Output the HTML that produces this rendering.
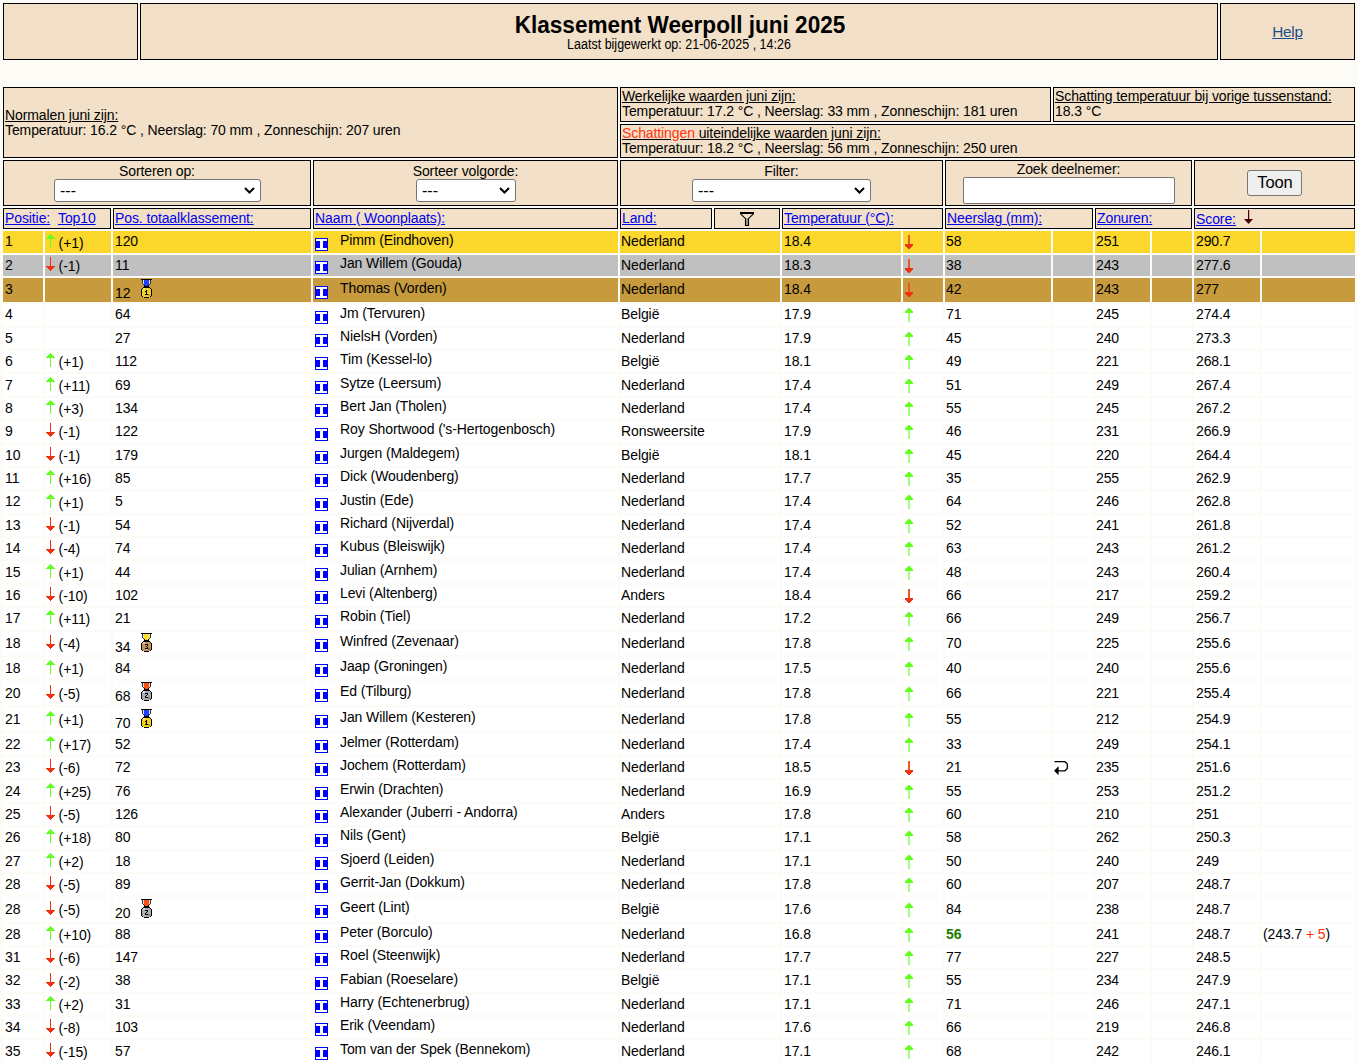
<!DOCTYPE html><html><head><meta charset="utf-8"><title>Klassement Weerpoll juni 2025</title><style>
html,body{margin:0;padding:0}
body{background:#FCFBF5;width:1357px;height:1062px;overflow:hidden;position:relative;font-family:"Liberation Sans",sans-serif;font-size:14px;line-height:16px;color:#000;letter-spacing:-0.1px}
.b{position:absolute;box-sizing:border-box;border:1px solid #000;background:#F2E0C8}
.c{position:absolute;background:#fff}
.t{position:absolute;white-space:pre}
.l{position:absolute;white-space:pre;color:#0000EE;text-decoration:underline}
.s{position:absolute;overflow:visible}
.g{color:#1D7A00}
.sel{position:absolute;box-sizing:border-box;border:1px solid #767676;border-radius:3px;background:#fff}
</style></head><body>
<svg width="0" height="0" style="position:absolute">
<defs>
<symbol id="ub" viewBox="0 0 9 14" shape-rendering="crispEdges"><rect x="4" y="0" width="1" height="1" fill="#66FF22"/><rect x="3" y="1" width="3" height="1" fill="#66FF22"/><rect x="2" y="2" width="5" height="1" fill="#66FF22"/><rect x="1" y="3" width="7" height="1" fill="#66FF22"/><rect x="0" y="4" width="9" height="1" fill="#66FF22"/><rect x="4" y="5" width="1" height="9" fill="#66FF22"/></symbol>
<symbol id="db" viewBox="0 0 9 14" shape-rendering="crispEdges"><rect x="4" y="0" width="1" height="9" fill="#F03010"/><rect x="0" y="9" width="9" height="1" fill="#F03010"/><rect x="1" y="10" width="7" height="1" fill="#F03010"/><rect x="2" y="11" width="5" height="1" fill="#F03010"/><rect x="3" y="12" width="3" height="1" fill="#F03010"/><rect x="4" y="13" width="1" height="1" fill="#F03010"/></symbol>
<symbol id="ug" viewBox="0 0 8 14" shape-rendering="crispEdges"><rect x="3" y="0" width="2" height="1" fill="#66FF22"/><rect x="2" y="1" width="4" height="1" fill="#66FF22"/><rect x="1" y="2" width="6" height="1" fill="#66FF22"/><rect x="0" y="3" width="8" height="1" fill="#66FF22"/><rect x="0" y="4" width="8" height="1" fill="#66FF22"/><rect x="3" y="5" width="2" height="9" fill="#A0FF80"/></symbol>
<symbol id="dg" viewBox="0 0 8 14" shape-rendering="crispEdges"><rect x="3" y="0" width="2" height="9" fill="#E85A22"/><rect x="0" y="9" width="8" height="1" fill="#EE3311"/><rect x="0" y="10" width="8" height="1" fill="#EE3311"/><rect x="1" y="11" width="6" height="1" fill="#EE3311"/><rect x="2" y="12" width="4" height="1" fill="#EE3311"/><rect x="3" y="13" width="2" height="1" fill="#EE3311"/></symbol>
<symbol id="ic" viewBox="0 0 13 13" shape-rendering="crispEdges"><rect width="13" height="13" fill="#0000FF"/><rect x="1" y="1" width="11" height="2" fill="#fff"/><rect x="1" y="10" width="11" height="2" fill="#fff"/><rect x="5" y="3" width="3" height="7" fill="#fff"/></symbol>
<symbol id="ret" viewBox="0 0 14 14"><path d="M0.5 0.7H11L13.3 3V7.5L11 9.8H4" fill="none" stroke="#000" stroke-width="1.3"/><path d="M0 9.8L4.6 5.2V14.2Z" fill="#000"/></symbol>
<symbol id="fun" viewBox="0 0 14 14"><rect x="5.5" y="6" width="3" height="7.5" fill="#A09585"/><rect x="0" y="0" width="14" height="2" fill="#000"/><path d="M0.6 1.8L5.5 6.7V13.5H8.5V6.7L13.4 1.8" fill="none" stroke="#000" stroke-width="1.1"/></symbol>
<symbol id="sar" viewBox="0 0 9 14"><rect x="4" y="0" width="1.2" height="10" fill="#4A0000"/><path d="M0 9H9L4.5 14Z" fill="#4A0000"/></symbol>
<symbol id="m1" viewBox="0 0 11 19" shape-rendering="crispEdges">
<rect x="0" y="0" width="11" height="1" fill="#000"/>
<rect x="1" y="1" width="9" height="4" fill="#333"/>
<rect x="2" y="1" width="7" height="4" fill="#E0E0E8"/>
<rect x="3" y="1" width="5" height="4" fill="#2040FF"/>
<rect x="2" y="5" width="7" height="1" fill="#333"/>
<rect x="3" y="5" width="5" height="1" fill="#2040FF"/>
<rect x="3" y="6" width="5" height="1" fill="#000"/>
<rect x="4" y="6" width="3" height="1" fill="#2040FF"/>
<rect x="3" y="7" width="5" height="1" fill="#000"/>
<rect x="2" y="8" width="7" height="1" fill="#000"/>
<rect x="1" y="9" width="9" height="9" fill="#000"/>
<rect x="0" y="10" width="11" height="7" fill="#000"/>
<rect x="3" y="18" width="5" height="1" fill="#000"/>
<rect x="2" y="9" width="7" height="9" fill="#F0D020"/>
<rect x="1" y="10" width="9" height="7" fill="#F0D020"/>
<rect x="2" y="9" width="2" height="2" fill="#FFFFFF" opacity="0.5"/>
<rect x="7" y="15" width="2" height="2" fill="#000" opacity="0.25"/>
<rect x="5" y="11" width="1" height="5" fill="#000"/><rect x="4" y="12" width="1" height="1" fill="#000"/><rect x="4" y="15" width="3" height="1" fill="#000"/>
</symbol><symbol id="m2" viewBox="0 0 11 19" shape-rendering="crispEdges">
<rect x="0" y="0" width="11" height="1" fill="#000"/>
<rect x="1" y="1" width="9" height="4" fill="#333"/>
<rect x="2" y="1" width="7" height="4" fill="#E0E0E8"/>
<rect x="3" y="1" width="5" height="4" fill="#FF5010"/>
<rect x="2" y="5" width="7" height="1" fill="#333"/>
<rect x="3" y="5" width="5" height="1" fill="#FF5010"/>
<rect x="3" y="6" width="5" height="1" fill="#000"/>
<rect x="4" y="6" width="3" height="1" fill="#FF5010"/>
<rect x="3" y="7" width="5" height="1" fill="#000"/>
<rect x="2" y="8" width="7" height="1" fill="#000"/>
<rect x="1" y="9" width="9" height="9" fill="#000"/>
<rect x="0" y="10" width="11" height="7" fill="#000"/>
<rect x="3" y="18" width="5" height="1" fill="#000"/>
<rect x="2" y="9" width="7" height="9" fill="#A8AEB4"/>
<rect x="1" y="10" width="9" height="7" fill="#A8AEB4"/>
<rect x="2" y="9" width="2" height="2" fill="#FFFFFF" opacity="0.5"/>
<rect x="7" y="15" width="2" height="2" fill="#000" opacity="0.25"/>
<rect x="4" y="11" width="3" height="1" fill="#000"/><rect x="6" y="12" width="1" height="1" fill="#000"/><rect x="5" y="13" width="1" height="1" fill="#000"/><rect x="4" y="14" width="1" height="1" fill="#000"/><rect x="4" y="15" width="3" height="1" fill="#000"/>
</symbol><symbol id="m3" viewBox="0 0 11 19" shape-rendering="crispEdges">
<rect x="0" y="0" width="11" height="1" fill="#000"/>
<rect x="1" y="1" width="9" height="4" fill="#333"/>
<rect x="2" y="1" width="7" height="4" fill="#E0E0E8"/>
<rect x="3" y="1" width="5" height="4" fill="#FFE020"/>
<rect x="2" y="5" width="7" height="1" fill="#333"/>
<rect x="3" y="5" width="5" height="1" fill="#FFE020"/>
<rect x="3" y="6" width="5" height="1" fill="#000"/>
<rect x="4" y="6" width="3" height="1" fill="#FFE020"/>
<rect x="3" y="7" width="5" height="1" fill="#000"/>
<rect x="2" y="8" width="7" height="1" fill="#000"/>
<rect x="1" y="9" width="9" height="9" fill="#000"/>
<rect x="0" y="10" width="11" height="7" fill="#000"/>
<rect x="3" y="18" width="5" height="1" fill="#000"/>
<rect x="2" y="9" width="7" height="9" fill="#C0945A"/>
<rect x="1" y="10" width="9" height="7" fill="#C0945A"/>
<rect x="2" y="9" width="2" height="2" fill="#FFFFFF" opacity="0.5"/>
<rect x="7" y="15" width="2" height="2" fill="#000" opacity="0.25"/>
<rect x="4" y="11" width="3" height="1" fill="#000"/><rect x="6" y="12" width="1" height="1" fill="#000"/><rect x="5" y="13" width="1" height="1" fill="#000"/><rect x="6" y="14" width="1" height="1" fill="#000"/><rect x="4" y="15" width="3" height="1" fill="#000"/>
</symbol></defs></svg>
<div class="b" style="left:3px;top:3px;width:135px;height:57px;"></div>
<div class="b" style="left:140px;top:3px;width:1078px;height:57px;"></div>
<div class="b" style="left:1220px;top:3px;width:135px;height:57px;"></div>
<div class="t" style="left:141px;width:1078px;top:8.5px;text-align:center;font-weight:bold;font-size:23.5px;line-height:32px;letter-spacing:0;transform:scaleX(0.96)">Klassement Weerpoll juni 2025</div>
<div class="t" style="left:140px;width:1078px;top:36px;text-align:center;font-size:14px;letter-spacing:0;transform:scaleX(0.893)">Laatst bijgewerkt op: 21-06-2025 , 14:26</div>
<div class="t" style="left:1220px;width:135px;top:23px;text-align:center;font-size:15.3px;line-height:18px;color:#1D4E89;letter-spacing:-0.2px;text-decoration:underline">Help</div>
<div class="b" style="left:3px;top:87px;width:615px;height:71px;"></div>
<div class="b" style="left:620px;top:87px;width:431px;height:35px;"></div>
<div class="b" style="left:1053px;top:87px;width:302px;height:35px;"></div>
<div class="b" style="left:620px;top:124px;width:735px;height:34px;"></div>
<div class="t" style="left:5px;top:107px;"><u>Normalen juni zijn:</u></div>
<div class="t" style="left:5px;top:122px;">Temperatuur: 16.2 °C , Neerslag: 70 mm , Zonneschijn: 207 uren</div>
<div class="t" style="left:622px;top:88px;"><u>Werkelijke waarden juni zijn:</u></div>
<div class="t" style="left:622px;top:103px;">Temperatuur: 17.2 °C , Neerslag: 33 mm , Zonneschijn: 181 uren</div>
<div class="t" style="left:1055px;top:88px;"><u>Schatting temperatuur bij vorige tussenstand:</u></div>
<div class="t" style="left:1055px;top:103px;">18.3 °C</div>
<div class="t" style="left:622px;top:125px;"><u><span style="color:#FF3311">Schattingen</span> uiteindelijke waarden juni zijn:</u></div>
<div class="t" style="left:622px;top:140px;">Temperatuur: 18.2 °C , Neerslag: 56 mm , Zonneschijn: 250 uren</div>
<div class="b" style="left:3px;top:160px;width:308px;height:46px;"></div>
<div class="b" style="left:313px;top:160px;width:305px;height:46px;"></div>
<div class="b" style="left:620px;top:160px;width:323px;height:46px;"></div>
<div class="b" style="left:945px;top:160px;width:247px;height:46px;"></div>
<div class="b" style="left:1194px;top:160px;width:161px;height:46px;"></div>
<div class="t" style="left:3px;width:308px;top:163px;text-align:center">Sorteren op:</div>
<div class="sel" style="left:54px;top:179px;width:207px;height:23px"></div>
<div class="t" style="left:60px;top:181.5px;font-size:16px;line-height:18px;letter-spacing:0">---</div>
<svg class="s" style="left:244px;top:187px" width="11" height="7"><path d="M1 1L5.5 5.5L10 1" fill="none" stroke="#000" stroke-width="2"/></svg>
<div class="t" style="left:313px;width:305px;top:163px;text-align:center">Sorteer volgorde:</div>
<div class="sel" style="left:416px;top:179px;width:100px;height:23px"></div>
<div class="t" style="left:422px;top:181.5px;font-size:16px;line-height:18px;letter-spacing:0">---</div>
<svg class="s" style="left:499px;top:187px" width="11" height="7"><path d="M1 1L5.5 5.5L10 1" fill="none" stroke="#000" stroke-width="2"/></svg>
<div class="t" style="left:620px;width:323px;top:163px;text-align:center">Filter:</div>
<div class="sel" style="left:692px;top:179px;width:179px;height:23px"></div>
<div class="t" style="left:698px;top:181.5px;font-size:16px;line-height:18px;letter-spacing:0">---</div>
<svg class="s" style="left:854px;top:187px" width="11" height="7"><path d="M1 1L5.5 5.5L10 1" fill="none" stroke="#000" stroke-width="2"/></svg>
<div class="t" style="left:945px;width:247px;top:161px;text-align:center">Zoek deelnemer:</div>
<div class="sel" style="left:963px;top:177px;width:212px;height:27px;border-radius:2px"></div>
<div class="sel" style="left:1247px;top:170px;width:55px;height:26px;background:#EFEFEF;border-radius:3px"></div>
<div class="t" style="left:1247px;width:56px;top:173px;text-align:center;font-size:16.5px;line-height:18px">Toon</div>
<div class="b" style="left:3px;top:208px;width:108px;height:21px;"></div>
<div class="b" style="left:113px;top:208px;width:198px;height:21px;"></div>
<div class="b" style="left:313px;top:208px;width:305px;height:21px;"></div>
<div class="b" style="left:620px;top:208px;width:92px;height:21px;"></div>
<div class="b" style="left:714px;top:208px;width:66px;height:21px;"></div>
<div class="b" style="left:782px;top:208px;width:161px;height:21px;"></div>
<div class="b" style="left:945px;top:208px;width:148px;height:21px;"></div>
<div class="b" style="left:1095px;top:208px;width:97px;height:21px;"></div>
<div class="b" style="left:1194px;top:208px;width:161px;height:21px;"></div>
<div class="l" style="left:5px;top:210px">Positie:</div>
<div class="l" style="left:58px;top:210px">Top10</div>
<div class="l" style="left:115px;top:210px">Pos. totaalklassement:</div>
<div class="l" style="left:315px;top:210px">Naam ( Woonplaats):</div>
<div class="l" style="left:622px;top:210px">Land:</div>
<div class="l" style="left:784px;top:210px">Temperatuur (°C):</div>
<div class="l" style="left:947px;top:210px">Neerslag (mm):</div>
<div class="l" style="left:1097px;top:210px">Zonuren:</div>
<div class="l" style="left:1196px;top:211px">Score:</div>
<svg class="s" style="left:740px;top:212px" width="14" height="14"><use href="#fun"/></svg>
<svg class="s" style="left:1244px;top:210px" width="9" height="14"><use href="#sar"/></svg>
<div class="c" style="left:3px;top:231px;width:40px;height:22px;background:#FBD62B"></div>
<div class="c" style="left:45px;top:231px;width:66px;height:22px;background:#FBD62B"></div>
<div class="c" style="left:113px;top:231px;width:198px;height:22px;background:#FBD62B"></div>
<div class="c" style="left:313px;top:231px;width:305px;height:22px;background:#FBD62B"></div>
<div class="c" style="left:620px;top:231px;width:160px;height:22px;background:#FBD62B"></div>
<div class="c" style="left:782px;top:231px;width:119px;height:22px;background:#FBD62B"></div>
<div class="c" style="left:903px;top:231px;width:40px;height:22px;background:#FBD62B"></div>
<div class="c" style="left:945px;top:231px;width:106px;height:22px;background:#FBD62B"></div>
<div class="c" style="left:1053px;top:231px;width:40px;height:22px;background:#FBD62B"></div>
<div class="c" style="left:1095px;top:231px;width:55px;height:22px;background:#FBD62B"></div>
<div class="c" style="left:1152px;top:231px;width:40px;height:22px;background:#FBD62B"></div>
<div class="c" style="left:1194px;top:231px;width:66px;height:22px;background:#FBD62B"></div>
<div class="c" style="left:1262px;top:231px;width:93px;height:22px;background:#FBD62B"></div>
<div class="t" style="left:5px;top:233px;">1</div>
<svg class="s" style="left:46px;top:234px" width="9" height="14"><use href="#ub"/></svg>
<div class="t" style="left:58.6px;top:235px;">(+1)</div>
<div class="t" style="left:115px;top:233px;">120</div>
<svg class="s" style="left:315px;top:238px" width="13" height="13"><use href="#ic"/></svg>
<div class="t" style="left:340px;top:232px;">Pimm (Eindhoven)</div>
<div class="t" style="left:621px;top:233px;">Nederland</div>
<div class="t" style="left:784px;top:233px;">18.4</div>
<svg class="s" style="left:905px;top:235px" width="8" height="14"><use href="#dg"/></svg>
<div class="t" style="left:946px;top:233px;">58</div>
<div class="t" style="left:1096px;top:233px;">251</div>
<div class="t" style="left:1196px;top:233px;">290.7</div>
<div class="c" style="left:3px;top:255px;width:40px;height:21px;background:#C0C0C0"></div>
<div class="c" style="left:45px;top:255px;width:66px;height:21px;background:#C0C0C0"></div>
<div class="c" style="left:113px;top:255px;width:198px;height:21px;background:#C0C0C0"></div>
<div class="c" style="left:313px;top:255px;width:305px;height:21px;background:#C0C0C0"></div>
<div class="c" style="left:620px;top:255px;width:160px;height:21px;background:#C0C0C0"></div>
<div class="c" style="left:782px;top:255px;width:119px;height:21px;background:#C0C0C0"></div>
<div class="c" style="left:903px;top:255px;width:40px;height:21px;background:#C0C0C0"></div>
<div class="c" style="left:945px;top:255px;width:106px;height:21px;background:#C0C0C0"></div>
<div class="c" style="left:1053px;top:255px;width:40px;height:21px;background:#C0C0C0"></div>
<div class="c" style="left:1095px;top:255px;width:55px;height:21px;background:#C0C0C0"></div>
<div class="c" style="left:1152px;top:255px;width:40px;height:21px;background:#C0C0C0"></div>
<div class="c" style="left:1194px;top:255px;width:66px;height:21px;background:#C0C0C0"></div>
<div class="c" style="left:1262px;top:255px;width:93px;height:21px;background:#C0C0C0"></div>
<div class="t" style="left:5px;top:257px;">2</div>
<svg class="s" style="left:46px;top:257px" width="9" height="14"><use href="#db"/></svg>
<div class="t" style="left:58.6px;top:258px;">(-1)</div>
<div class="t" style="left:115px;top:257px;">11</div>
<svg class="s" style="left:315px;top:261px" width="13" height="13"><use href="#ic"/></svg>
<div class="t" style="left:340px;top:255px;">Jan Willem (Gouda)</div>
<div class="t" style="left:621px;top:257px;">Nederland</div>
<div class="t" style="left:784px;top:257px;">18.3</div>
<svg class="s" style="left:905px;top:259px" width="8" height="14"><use href="#dg"/></svg>
<div class="t" style="left:946px;top:257px;">38</div>
<div class="t" style="left:1096px;top:257px;">243</div>
<div class="t" style="left:1196px;top:257px;">277.6</div>
<div class="c" style="left:3px;top:278px;width:40px;height:24px;background:#C69A3D"></div>
<div class="c" style="left:45px;top:278px;width:66px;height:24px;background:#C69A3D"></div>
<div class="c" style="left:113px;top:278px;width:198px;height:24px;background:#C69A3D"></div>
<div class="c" style="left:313px;top:278px;width:305px;height:24px;background:#C69A3D"></div>
<div class="c" style="left:620px;top:278px;width:160px;height:24px;background:#C69A3D"></div>
<div class="c" style="left:782px;top:278px;width:119px;height:24px;background:#C69A3D"></div>
<div class="c" style="left:903px;top:278px;width:40px;height:24px;background:#C69A3D"></div>
<div class="c" style="left:945px;top:278px;width:106px;height:24px;background:#C69A3D"></div>
<div class="c" style="left:1053px;top:278px;width:40px;height:24px;background:#C69A3D"></div>
<div class="c" style="left:1095px;top:278px;width:55px;height:24px;background:#C69A3D"></div>
<div class="c" style="left:1152px;top:278px;width:40px;height:24px;background:#C69A3D"></div>
<div class="c" style="left:1194px;top:278px;width:66px;height:24px;background:#C69A3D"></div>
<div class="c" style="left:1262px;top:278px;width:93px;height:24px;background:#C69A3D"></div>
<div class="t" style="left:5px;top:281px;">3</div>
<div class="t" style="left:115px;top:285px;">12</div>
<svg class="s" style="left:141px;top:279px" width="11" height="19"><use href="#m1"/></svg>
<svg class="s" style="left:315px;top:286px" width="13" height="13"><use href="#ic"/></svg>
<div class="t" style="left:340px;top:280px;">Thomas (Vorden)</div>
<div class="t" style="left:621px;top:281px;">Nederland</div>
<div class="t" style="left:784px;top:281px;">18.4</div>
<svg class="s" style="left:905px;top:283px" width="8" height="14"><use href="#dg"/></svg>
<div class="t" style="left:946px;top:281px;">42</div>
<div class="t" style="left:1096px;top:281px;">243</div>
<div class="t" style="left:1196px;top:281px;">277</div>
<div class="c" style="left:3px;top:304px;width:40px;height:22px;background:#fff"></div>
<div class="c" style="left:45px;top:304px;width:66px;height:22px;background:#fff"></div>
<div class="c" style="left:113px;top:304px;width:198px;height:22px;background:#fff"></div>
<div class="c" style="left:313px;top:304px;width:305px;height:22px;background:#fff"></div>
<div class="c" style="left:620px;top:304px;width:160px;height:22px;background:#fff"></div>
<div class="c" style="left:782px;top:304px;width:119px;height:22px;background:#fff"></div>
<div class="c" style="left:903px;top:304px;width:40px;height:22px;background:#fff"></div>
<div class="c" style="left:945px;top:304px;width:106px;height:22px;background:#fff"></div>
<div class="c" style="left:1053px;top:304px;width:40px;height:22px;background:#fff"></div>
<div class="c" style="left:1095px;top:304px;width:55px;height:22px;background:#fff"></div>
<div class="c" style="left:1152px;top:304px;width:40px;height:22px;background:#fff"></div>
<div class="c" style="left:1194px;top:304px;width:66px;height:22px;background:#fff"></div>
<div class="c" style="left:1262px;top:304px;width:93px;height:22px;background:#fff"></div>
<div class="t" style="left:5px;top:306px;">4</div>
<div class="t" style="left:115px;top:306px;">64</div>
<svg class="s" style="left:315px;top:311px" width="13" height="13"><use href="#ic"/></svg>
<div class="t" style="left:340px;top:305px;">Jm (Tervuren)</div>
<div class="t" style="left:621px;top:306px;">België</div>
<div class="t" style="left:784px;top:306px;">17.9</div>
<svg class="s" style="left:905px;top:308px" width="8" height="14"><use href="#ug"/></svg>
<div class="t" style="left:946px;top:306px;">71</div>
<div class="t" style="left:1096px;top:306px;">245</div>
<div class="t" style="left:1196px;top:306px;">274.4</div>
<div class="c" style="left:3px;top:328px;width:40px;height:21px;background:#fff"></div>
<div class="c" style="left:45px;top:328px;width:66px;height:21px;background:#fff"></div>
<div class="c" style="left:113px;top:328px;width:198px;height:21px;background:#fff"></div>
<div class="c" style="left:313px;top:328px;width:305px;height:21px;background:#fff"></div>
<div class="c" style="left:620px;top:328px;width:160px;height:21px;background:#fff"></div>
<div class="c" style="left:782px;top:328px;width:119px;height:21px;background:#fff"></div>
<div class="c" style="left:903px;top:328px;width:40px;height:21px;background:#fff"></div>
<div class="c" style="left:945px;top:328px;width:106px;height:21px;background:#fff"></div>
<div class="c" style="left:1053px;top:328px;width:40px;height:21px;background:#fff"></div>
<div class="c" style="left:1095px;top:328px;width:55px;height:21px;background:#fff"></div>
<div class="c" style="left:1152px;top:328px;width:40px;height:21px;background:#fff"></div>
<div class="c" style="left:1194px;top:328px;width:66px;height:21px;background:#fff"></div>
<div class="c" style="left:1262px;top:328px;width:93px;height:21px;background:#fff"></div>
<div class="t" style="left:5px;top:330px;">5</div>
<div class="t" style="left:115px;top:330px;">27</div>
<svg class="s" style="left:315px;top:334px" width="13" height="13"><use href="#ic"/></svg>
<div class="t" style="left:340px;top:328px;">NielsH (Vorden)</div>
<div class="t" style="left:621px;top:330px;">Nederland</div>
<div class="t" style="left:784px;top:330px;">17.9</div>
<svg class="s" style="left:905px;top:332px" width="8" height="14"><use href="#ug"/></svg>
<div class="t" style="left:946px;top:330px;">45</div>
<div class="t" style="left:1096px;top:330px;">240</div>
<div class="t" style="left:1196px;top:330px;">273.3</div>
<div class="c" style="left:3px;top:351px;width:40px;height:21px;background:#fff"></div>
<div class="c" style="left:45px;top:351px;width:66px;height:21px;background:#fff"></div>
<div class="c" style="left:113px;top:351px;width:198px;height:21px;background:#fff"></div>
<div class="c" style="left:313px;top:351px;width:305px;height:21px;background:#fff"></div>
<div class="c" style="left:620px;top:351px;width:160px;height:21px;background:#fff"></div>
<div class="c" style="left:782px;top:351px;width:119px;height:21px;background:#fff"></div>
<div class="c" style="left:903px;top:351px;width:40px;height:21px;background:#fff"></div>
<div class="c" style="left:945px;top:351px;width:106px;height:21px;background:#fff"></div>
<div class="c" style="left:1053px;top:351px;width:40px;height:21px;background:#fff"></div>
<div class="c" style="left:1095px;top:351px;width:55px;height:21px;background:#fff"></div>
<div class="c" style="left:1152px;top:351px;width:40px;height:21px;background:#fff"></div>
<div class="c" style="left:1194px;top:351px;width:66px;height:21px;background:#fff"></div>
<div class="c" style="left:1262px;top:351px;width:93px;height:21px;background:#fff"></div>
<div class="t" style="left:5px;top:353px;">6</div>
<svg class="s" style="left:46px;top:353px" width="9" height="14"><use href="#ub"/></svg>
<div class="t" style="left:58.6px;top:354px;">(+1)</div>
<div class="t" style="left:115px;top:353px;">112</div>
<svg class="s" style="left:315px;top:357px" width="13" height="13"><use href="#ic"/></svg>
<div class="t" style="left:340px;top:351px;">Tim (Kessel-lo)</div>
<div class="t" style="left:621px;top:353px;">België</div>
<div class="t" style="left:784px;top:353px;">18.1</div>
<svg class="s" style="left:905px;top:355px" width="8" height="14"><use href="#ug"/></svg>
<div class="t" style="left:946px;top:353px;">49</div>
<div class="t" style="left:1096px;top:353px;">221</div>
<div class="t" style="left:1196px;top:353px;">268.1</div>
<div class="c" style="left:3px;top:374px;width:40px;height:22px;background:#fff"></div>
<div class="c" style="left:45px;top:374px;width:66px;height:22px;background:#fff"></div>
<div class="c" style="left:113px;top:374px;width:198px;height:22px;background:#fff"></div>
<div class="c" style="left:313px;top:374px;width:305px;height:22px;background:#fff"></div>
<div class="c" style="left:620px;top:374px;width:160px;height:22px;background:#fff"></div>
<div class="c" style="left:782px;top:374px;width:119px;height:22px;background:#fff"></div>
<div class="c" style="left:903px;top:374px;width:40px;height:22px;background:#fff"></div>
<div class="c" style="left:945px;top:374px;width:106px;height:22px;background:#fff"></div>
<div class="c" style="left:1053px;top:374px;width:40px;height:22px;background:#fff"></div>
<div class="c" style="left:1095px;top:374px;width:55px;height:22px;background:#fff"></div>
<div class="c" style="left:1152px;top:374px;width:40px;height:22px;background:#fff"></div>
<div class="c" style="left:1194px;top:374px;width:66px;height:22px;background:#fff"></div>
<div class="c" style="left:1262px;top:374px;width:93px;height:22px;background:#fff"></div>
<div class="t" style="left:5px;top:377px;">7</div>
<svg class="s" style="left:46px;top:377px" width="9" height="14"><use href="#ub"/></svg>
<div class="t" style="left:58.6px;top:378px;">(+11)</div>
<div class="t" style="left:115px;top:377px;">69</div>
<svg class="s" style="left:315px;top:381px" width="13" height="13"><use href="#ic"/></svg>
<div class="t" style="left:340px;top:375px;">Sytze (Leersum)</div>
<div class="t" style="left:621px;top:377px;">Nederland</div>
<div class="t" style="left:784px;top:377px;">17.4</div>
<svg class="s" style="left:905px;top:379px" width="8" height="14"><use href="#ug"/></svg>
<div class="t" style="left:946px;top:377px;">51</div>
<div class="t" style="left:1096px;top:377px;">249</div>
<div class="t" style="left:1196px;top:377px;">267.4</div>
<div class="c" style="left:3px;top:398px;width:40px;height:21px;background:#fff"></div>
<div class="c" style="left:45px;top:398px;width:66px;height:21px;background:#fff"></div>
<div class="c" style="left:113px;top:398px;width:198px;height:21px;background:#fff"></div>
<div class="c" style="left:313px;top:398px;width:305px;height:21px;background:#fff"></div>
<div class="c" style="left:620px;top:398px;width:160px;height:21px;background:#fff"></div>
<div class="c" style="left:782px;top:398px;width:119px;height:21px;background:#fff"></div>
<div class="c" style="left:903px;top:398px;width:40px;height:21px;background:#fff"></div>
<div class="c" style="left:945px;top:398px;width:106px;height:21px;background:#fff"></div>
<div class="c" style="left:1053px;top:398px;width:40px;height:21px;background:#fff"></div>
<div class="c" style="left:1095px;top:398px;width:55px;height:21px;background:#fff"></div>
<div class="c" style="left:1152px;top:398px;width:40px;height:21px;background:#fff"></div>
<div class="c" style="left:1194px;top:398px;width:66px;height:21px;background:#fff"></div>
<div class="c" style="left:1262px;top:398px;width:93px;height:21px;background:#fff"></div>
<div class="t" style="left:5px;top:400px;">8</div>
<svg class="s" style="left:46px;top:400px" width="9" height="14"><use href="#ub"/></svg>
<div class="t" style="left:58.6px;top:401px;">(+3)</div>
<div class="t" style="left:115px;top:400px;">134</div>
<svg class="s" style="left:315px;top:404px" width="13" height="13"><use href="#ic"/></svg>
<div class="t" style="left:340px;top:398px;">Bert Jan (Tholen)</div>
<div class="t" style="left:621px;top:400px;">Nederland</div>
<div class="t" style="left:784px;top:400px;">17.4</div>
<svg class="s" style="left:905px;top:402px" width="8" height="14"><use href="#ug"/></svg>
<div class="t" style="left:946px;top:400px;">55</div>
<div class="t" style="left:1096px;top:400px;">245</div>
<div class="t" style="left:1196px;top:400px;">267.2</div>
<div class="c" style="left:3px;top:421px;width:40px;height:22px;background:#fff"></div>
<div class="c" style="left:45px;top:421px;width:66px;height:22px;background:#fff"></div>
<div class="c" style="left:113px;top:421px;width:198px;height:22px;background:#fff"></div>
<div class="c" style="left:313px;top:421px;width:305px;height:22px;background:#fff"></div>
<div class="c" style="left:620px;top:421px;width:160px;height:22px;background:#fff"></div>
<div class="c" style="left:782px;top:421px;width:119px;height:22px;background:#fff"></div>
<div class="c" style="left:903px;top:421px;width:40px;height:22px;background:#fff"></div>
<div class="c" style="left:945px;top:421px;width:106px;height:22px;background:#fff"></div>
<div class="c" style="left:1053px;top:421px;width:40px;height:22px;background:#fff"></div>
<div class="c" style="left:1095px;top:421px;width:55px;height:22px;background:#fff"></div>
<div class="c" style="left:1152px;top:421px;width:40px;height:22px;background:#fff"></div>
<div class="c" style="left:1194px;top:421px;width:66px;height:22px;background:#fff"></div>
<div class="c" style="left:1262px;top:421px;width:93px;height:22px;background:#fff"></div>
<div class="t" style="left:5px;top:423px;">9</div>
<svg class="s" style="left:46px;top:423px" width="9" height="14"><use href="#db"/></svg>
<div class="t" style="left:58.6px;top:424px;">(-1)</div>
<div class="t" style="left:115px;top:423px;">122</div>
<svg class="s" style="left:315px;top:428px" width="13" height="13"><use href="#ic"/></svg>
<div class="t" style="left:340px;top:421px;">Roy Shortwood (&#x27;s-Hertogenbosch)</div>
<div class="t" style="left:621px;top:423px;">Ronsweersite</div>
<div class="t" style="left:784px;top:423px;">17.9</div>
<svg class="s" style="left:905px;top:425px" width="8" height="14"><use href="#ug"/></svg>
<div class="t" style="left:946px;top:423px;">46</div>
<div class="t" style="left:1096px;top:423px;">231</div>
<div class="t" style="left:1196px;top:423px;">266.9</div>
<div class="c" style="left:3px;top:445px;width:40px;height:21px;background:#fff"></div>
<div class="c" style="left:45px;top:445px;width:66px;height:21px;background:#fff"></div>
<div class="c" style="left:113px;top:445px;width:198px;height:21px;background:#fff"></div>
<div class="c" style="left:313px;top:445px;width:305px;height:21px;background:#fff"></div>
<div class="c" style="left:620px;top:445px;width:160px;height:21px;background:#fff"></div>
<div class="c" style="left:782px;top:445px;width:119px;height:21px;background:#fff"></div>
<div class="c" style="left:903px;top:445px;width:40px;height:21px;background:#fff"></div>
<div class="c" style="left:945px;top:445px;width:106px;height:21px;background:#fff"></div>
<div class="c" style="left:1053px;top:445px;width:40px;height:21px;background:#fff"></div>
<div class="c" style="left:1095px;top:445px;width:55px;height:21px;background:#fff"></div>
<div class="c" style="left:1152px;top:445px;width:40px;height:21px;background:#fff"></div>
<div class="c" style="left:1194px;top:445px;width:66px;height:21px;background:#fff"></div>
<div class="c" style="left:1262px;top:445px;width:93px;height:21px;background:#fff"></div>
<div class="t" style="left:5px;top:447px;">10</div>
<svg class="s" style="left:46px;top:447px" width="9" height="14"><use href="#db"/></svg>
<div class="t" style="left:58.6px;top:448px;">(-1)</div>
<div class="t" style="left:115px;top:447px;">179</div>
<svg class="s" style="left:315px;top:451px" width="13" height="13"><use href="#ic"/></svg>
<div class="t" style="left:340px;top:445px;">Jurgen (Maldegem)</div>
<div class="t" style="left:621px;top:447px;">België</div>
<div class="t" style="left:784px;top:447px;">18.1</div>
<svg class="s" style="left:905px;top:449px" width="8" height="14"><use href="#ug"/></svg>
<div class="t" style="left:946px;top:447px;">45</div>
<div class="t" style="left:1096px;top:447px;">220</div>
<div class="t" style="left:1196px;top:447px;">264.4</div>
<div class="c" style="left:3px;top:468px;width:40px;height:21px;background:#fff"></div>
<div class="c" style="left:45px;top:468px;width:66px;height:21px;background:#fff"></div>
<div class="c" style="left:113px;top:468px;width:198px;height:21px;background:#fff"></div>
<div class="c" style="left:313px;top:468px;width:305px;height:21px;background:#fff"></div>
<div class="c" style="left:620px;top:468px;width:160px;height:21px;background:#fff"></div>
<div class="c" style="left:782px;top:468px;width:119px;height:21px;background:#fff"></div>
<div class="c" style="left:903px;top:468px;width:40px;height:21px;background:#fff"></div>
<div class="c" style="left:945px;top:468px;width:106px;height:21px;background:#fff"></div>
<div class="c" style="left:1053px;top:468px;width:40px;height:21px;background:#fff"></div>
<div class="c" style="left:1095px;top:468px;width:55px;height:21px;background:#fff"></div>
<div class="c" style="left:1152px;top:468px;width:40px;height:21px;background:#fff"></div>
<div class="c" style="left:1194px;top:468px;width:66px;height:21px;background:#fff"></div>
<div class="c" style="left:1262px;top:468px;width:93px;height:21px;background:#fff"></div>
<div class="t" style="left:5px;top:470px;">11</div>
<svg class="s" style="left:46px;top:470px" width="9" height="14"><use href="#ub"/></svg>
<div class="t" style="left:58.6px;top:471px;">(+16)</div>
<div class="t" style="left:115px;top:470px;">85</div>
<svg class="s" style="left:315px;top:474px" width="13" height="13"><use href="#ic"/></svg>
<div class="t" style="left:340px;top:468px;">Dick (Woudenberg)</div>
<div class="t" style="left:621px;top:470px;">Nederland</div>
<div class="t" style="left:784px;top:470px;">17.7</div>
<svg class="s" style="left:905px;top:472px" width="8" height="14"><use href="#ug"/></svg>
<div class="t" style="left:946px;top:470px;">35</div>
<div class="t" style="left:1096px;top:470px;">255</div>
<div class="t" style="left:1196px;top:470px;">262.9</div>
<div class="c" style="left:3px;top:491px;width:40px;height:22px;background:#fff"></div>
<div class="c" style="left:45px;top:491px;width:66px;height:22px;background:#fff"></div>
<div class="c" style="left:113px;top:491px;width:198px;height:22px;background:#fff"></div>
<div class="c" style="left:313px;top:491px;width:305px;height:22px;background:#fff"></div>
<div class="c" style="left:620px;top:491px;width:160px;height:22px;background:#fff"></div>
<div class="c" style="left:782px;top:491px;width:119px;height:22px;background:#fff"></div>
<div class="c" style="left:903px;top:491px;width:40px;height:22px;background:#fff"></div>
<div class="c" style="left:945px;top:491px;width:106px;height:22px;background:#fff"></div>
<div class="c" style="left:1053px;top:491px;width:40px;height:22px;background:#fff"></div>
<div class="c" style="left:1095px;top:491px;width:55px;height:22px;background:#fff"></div>
<div class="c" style="left:1152px;top:491px;width:40px;height:22px;background:#fff"></div>
<div class="c" style="left:1194px;top:491px;width:66px;height:22px;background:#fff"></div>
<div class="c" style="left:1262px;top:491px;width:93px;height:22px;background:#fff"></div>
<div class="t" style="left:5px;top:493px;">12</div>
<svg class="s" style="left:46px;top:494px" width="9" height="14"><use href="#ub"/></svg>
<div class="t" style="left:58.6px;top:495px;">(+1)</div>
<div class="t" style="left:115px;top:493px;">5</div>
<svg class="s" style="left:315px;top:498px" width="13" height="13"><use href="#ic"/></svg>
<div class="t" style="left:340px;top:492px;">Justin (Ede)</div>
<div class="t" style="left:621px;top:493px;">Nederland</div>
<div class="t" style="left:784px;top:493px;">17.4</div>
<svg class="s" style="left:905px;top:495px" width="8" height="14"><use href="#ug"/></svg>
<div class="t" style="left:946px;top:493px;">64</div>
<div class="t" style="left:1096px;top:493px;">246</div>
<div class="t" style="left:1196px;top:493px;">262.8</div>
<div class="c" style="left:3px;top:515px;width:40px;height:21px;background:#fff"></div>
<div class="c" style="left:45px;top:515px;width:66px;height:21px;background:#fff"></div>
<div class="c" style="left:113px;top:515px;width:198px;height:21px;background:#fff"></div>
<div class="c" style="left:313px;top:515px;width:305px;height:21px;background:#fff"></div>
<div class="c" style="left:620px;top:515px;width:160px;height:21px;background:#fff"></div>
<div class="c" style="left:782px;top:515px;width:119px;height:21px;background:#fff"></div>
<div class="c" style="left:903px;top:515px;width:40px;height:21px;background:#fff"></div>
<div class="c" style="left:945px;top:515px;width:106px;height:21px;background:#fff"></div>
<div class="c" style="left:1053px;top:515px;width:40px;height:21px;background:#fff"></div>
<div class="c" style="left:1095px;top:515px;width:55px;height:21px;background:#fff"></div>
<div class="c" style="left:1152px;top:515px;width:40px;height:21px;background:#fff"></div>
<div class="c" style="left:1194px;top:515px;width:66px;height:21px;background:#fff"></div>
<div class="c" style="left:1262px;top:515px;width:93px;height:21px;background:#fff"></div>
<div class="t" style="left:5px;top:517px;">13</div>
<svg class="s" style="left:46px;top:517px" width="9" height="14"><use href="#db"/></svg>
<div class="t" style="left:58.6px;top:518px;">(-1)</div>
<div class="t" style="left:115px;top:517px;">54</div>
<svg class="s" style="left:315px;top:521px" width="13" height="13"><use href="#ic"/></svg>
<div class="t" style="left:340px;top:515px;">Richard (Nijverdal)</div>
<div class="t" style="left:621px;top:517px;">Nederland</div>
<div class="t" style="left:784px;top:517px;">17.4</div>
<svg class="s" style="left:905px;top:519px" width="8" height="14"><use href="#ug"/></svg>
<div class="t" style="left:946px;top:517px;">52</div>
<div class="t" style="left:1096px;top:517px;">241</div>
<div class="t" style="left:1196px;top:517px;">261.8</div>
<div class="c" style="left:3px;top:538px;width:40px;height:21px;background:#fff"></div>
<div class="c" style="left:45px;top:538px;width:66px;height:21px;background:#fff"></div>
<div class="c" style="left:113px;top:538px;width:198px;height:21px;background:#fff"></div>
<div class="c" style="left:313px;top:538px;width:305px;height:21px;background:#fff"></div>
<div class="c" style="left:620px;top:538px;width:160px;height:21px;background:#fff"></div>
<div class="c" style="left:782px;top:538px;width:119px;height:21px;background:#fff"></div>
<div class="c" style="left:903px;top:538px;width:40px;height:21px;background:#fff"></div>
<div class="c" style="left:945px;top:538px;width:106px;height:21px;background:#fff"></div>
<div class="c" style="left:1053px;top:538px;width:40px;height:21px;background:#fff"></div>
<div class="c" style="left:1095px;top:538px;width:55px;height:21px;background:#fff"></div>
<div class="c" style="left:1152px;top:538px;width:40px;height:21px;background:#fff"></div>
<div class="c" style="left:1194px;top:538px;width:66px;height:21px;background:#fff"></div>
<div class="c" style="left:1262px;top:538px;width:93px;height:21px;background:#fff"></div>
<div class="t" style="left:5px;top:540px;">14</div>
<svg class="s" style="left:46px;top:540px" width="9" height="14"><use href="#db"/></svg>
<div class="t" style="left:58.6px;top:541px;">(-4)</div>
<div class="t" style="left:115px;top:540px;">74</div>
<svg class="s" style="left:315px;top:544px" width="13" height="13"><use href="#ic"/></svg>
<div class="t" style="left:340px;top:538px;">Kubus (Bleiswijk)</div>
<div class="t" style="left:621px;top:540px;">Nederland</div>
<div class="t" style="left:784px;top:540px;">17.4</div>
<svg class="s" style="left:905px;top:542px" width="8" height="14"><use href="#ug"/></svg>
<div class="t" style="left:946px;top:540px;">63</div>
<div class="t" style="left:1096px;top:540px;">243</div>
<div class="t" style="left:1196px;top:540px;">261.2</div>
<div class="c" style="left:3px;top:561px;width:40px;height:22px;background:#fff"></div>
<div class="c" style="left:45px;top:561px;width:66px;height:22px;background:#fff"></div>
<div class="c" style="left:113px;top:561px;width:198px;height:22px;background:#fff"></div>
<div class="c" style="left:313px;top:561px;width:305px;height:22px;background:#fff"></div>
<div class="c" style="left:620px;top:561px;width:160px;height:22px;background:#fff"></div>
<div class="c" style="left:782px;top:561px;width:119px;height:22px;background:#fff"></div>
<div class="c" style="left:903px;top:561px;width:40px;height:22px;background:#fff"></div>
<div class="c" style="left:945px;top:561px;width:106px;height:22px;background:#fff"></div>
<div class="c" style="left:1053px;top:561px;width:40px;height:22px;background:#fff"></div>
<div class="c" style="left:1095px;top:561px;width:55px;height:22px;background:#fff"></div>
<div class="c" style="left:1152px;top:561px;width:40px;height:22px;background:#fff"></div>
<div class="c" style="left:1194px;top:561px;width:66px;height:22px;background:#fff"></div>
<div class="c" style="left:1262px;top:561px;width:93px;height:22px;background:#fff"></div>
<div class="t" style="left:5px;top:564px;">15</div>
<svg class="s" style="left:46px;top:564px" width="9" height="14"><use href="#ub"/></svg>
<div class="t" style="left:58.6px;top:565px;">(+1)</div>
<div class="t" style="left:115px;top:564px;">44</div>
<svg class="s" style="left:315px;top:568px" width="13" height="13"><use href="#ic"/></svg>
<div class="t" style="left:340px;top:562px;">Julian (Arnhem)</div>
<div class="t" style="left:621px;top:564px;">Nederland</div>
<div class="t" style="left:784px;top:564px;">17.4</div>
<svg class="s" style="left:905px;top:566px" width="8" height="14"><use href="#ug"/></svg>
<div class="t" style="left:946px;top:564px;">48</div>
<div class="t" style="left:1096px;top:564px;">243</div>
<div class="t" style="left:1196px;top:564px;">260.4</div>
<div class="c" style="left:3px;top:585px;width:40px;height:21px;background:#fff"></div>
<div class="c" style="left:45px;top:585px;width:66px;height:21px;background:#fff"></div>
<div class="c" style="left:113px;top:585px;width:198px;height:21px;background:#fff"></div>
<div class="c" style="left:313px;top:585px;width:305px;height:21px;background:#fff"></div>
<div class="c" style="left:620px;top:585px;width:160px;height:21px;background:#fff"></div>
<div class="c" style="left:782px;top:585px;width:119px;height:21px;background:#fff"></div>
<div class="c" style="left:903px;top:585px;width:40px;height:21px;background:#fff"></div>
<div class="c" style="left:945px;top:585px;width:106px;height:21px;background:#fff"></div>
<div class="c" style="left:1053px;top:585px;width:40px;height:21px;background:#fff"></div>
<div class="c" style="left:1095px;top:585px;width:55px;height:21px;background:#fff"></div>
<div class="c" style="left:1152px;top:585px;width:40px;height:21px;background:#fff"></div>
<div class="c" style="left:1194px;top:585px;width:66px;height:21px;background:#fff"></div>
<div class="c" style="left:1262px;top:585px;width:93px;height:21px;background:#fff"></div>
<div class="t" style="left:5px;top:587px;">16</div>
<svg class="s" style="left:46px;top:587px" width="9" height="14"><use href="#db"/></svg>
<div class="t" style="left:58.6px;top:588px;">(-10)</div>
<div class="t" style="left:115px;top:587px;">102</div>
<svg class="s" style="left:315px;top:591px" width="13" height="13"><use href="#ic"/></svg>
<div class="t" style="left:340px;top:585px;">Levi (Altenberg)</div>
<div class="t" style="left:621px;top:587px;">Anders</div>
<div class="t" style="left:784px;top:587px;">18.4</div>
<svg class="s" style="left:905px;top:589px" width="8" height="14"><use href="#dg"/></svg>
<div class="t" style="left:946px;top:587px;">66</div>
<div class="t" style="left:1096px;top:587px;">217</div>
<div class="t" style="left:1196px;top:587px;">259.2</div>
<div class="c" style="left:3px;top:608px;width:40px;height:22px;background:#fff"></div>
<div class="c" style="left:45px;top:608px;width:66px;height:22px;background:#fff"></div>
<div class="c" style="left:113px;top:608px;width:198px;height:22px;background:#fff"></div>
<div class="c" style="left:313px;top:608px;width:305px;height:22px;background:#fff"></div>
<div class="c" style="left:620px;top:608px;width:160px;height:22px;background:#fff"></div>
<div class="c" style="left:782px;top:608px;width:119px;height:22px;background:#fff"></div>
<div class="c" style="left:903px;top:608px;width:40px;height:22px;background:#fff"></div>
<div class="c" style="left:945px;top:608px;width:106px;height:22px;background:#fff"></div>
<div class="c" style="left:1053px;top:608px;width:40px;height:22px;background:#fff"></div>
<div class="c" style="left:1095px;top:608px;width:55px;height:22px;background:#fff"></div>
<div class="c" style="left:1152px;top:608px;width:40px;height:22px;background:#fff"></div>
<div class="c" style="left:1194px;top:608px;width:66px;height:22px;background:#fff"></div>
<div class="c" style="left:1262px;top:608px;width:93px;height:22px;background:#fff"></div>
<div class="t" style="left:5px;top:610px;">17</div>
<svg class="s" style="left:46px;top:610px" width="9" height="14"><use href="#ub"/></svg>
<div class="t" style="left:58.6px;top:611px;">(+11)</div>
<div class="t" style="left:115px;top:610px;">21</div>
<svg class="s" style="left:315px;top:615px" width="13" height="13"><use href="#ic"/></svg>
<div class="t" style="left:340px;top:608px;">Robin (Tiel)</div>
<div class="t" style="left:621px;top:610px;">Nederland</div>
<div class="t" style="left:784px;top:610px;">17.2</div>
<svg class="s" style="left:905px;top:612px" width="8" height="14"><use href="#ug"/></svg>
<div class="t" style="left:946px;top:610px;">66</div>
<div class="t" style="left:1096px;top:610px;">249</div>
<div class="t" style="left:1196px;top:610px;">256.7</div>
<div class="c" style="left:3px;top:632px;width:40px;height:23px;background:#fff"></div>
<div class="c" style="left:45px;top:632px;width:66px;height:23px;background:#fff"></div>
<div class="c" style="left:113px;top:632px;width:198px;height:23px;background:#fff"></div>
<div class="c" style="left:313px;top:632px;width:305px;height:23px;background:#fff"></div>
<div class="c" style="left:620px;top:632px;width:160px;height:23px;background:#fff"></div>
<div class="c" style="left:782px;top:632px;width:119px;height:23px;background:#fff"></div>
<div class="c" style="left:903px;top:632px;width:40px;height:23px;background:#fff"></div>
<div class="c" style="left:945px;top:632px;width:106px;height:23px;background:#fff"></div>
<div class="c" style="left:1053px;top:632px;width:40px;height:23px;background:#fff"></div>
<div class="c" style="left:1095px;top:632px;width:55px;height:23px;background:#fff"></div>
<div class="c" style="left:1152px;top:632px;width:40px;height:23px;background:#fff"></div>
<div class="c" style="left:1194px;top:632px;width:66px;height:23px;background:#fff"></div>
<div class="c" style="left:1262px;top:632px;width:93px;height:23px;background:#fff"></div>
<div class="t" style="left:5px;top:635px;">18</div>
<svg class="s" style="left:46px;top:635px" width="9" height="14"><use href="#db"/></svg>
<div class="t" style="left:58.6px;top:636px;">(-4)</div>
<div class="t" style="left:115px;top:639px;">34</div>
<svg class="s" style="left:141px;top:633px" width="11" height="19"><use href="#m3"/></svg>
<svg class="s" style="left:315px;top:639px" width="13" height="13"><use href="#ic"/></svg>
<div class="t" style="left:340px;top:633px;">Winfred (Zevenaar)</div>
<div class="t" style="left:621px;top:635px;">Nederland</div>
<div class="t" style="left:784px;top:635px;">17.8</div>
<svg class="s" style="left:905px;top:637px" width="8" height="14"><use href="#ug"/></svg>
<div class="t" style="left:946px;top:635px;">70</div>
<div class="t" style="left:1096px;top:635px;">225</div>
<div class="t" style="left:1196px;top:635px;">255.6</div>
<div class="c" style="left:3px;top:657px;width:40px;height:22px;background:#fff"></div>
<div class="c" style="left:45px;top:657px;width:66px;height:22px;background:#fff"></div>
<div class="c" style="left:113px;top:657px;width:198px;height:22px;background:#fff"></div>
<div class="c" style="left:313px;top:657px;width:305px;height:22px;background:#fff"></div>
<div class="c" style="left:620px;top:657px;width:160px;height:22px;background:#fff"></div>
<div class="c" style="left:782px;top:657px;width:119px;height:22px;background:#fff"></div>
<div class="c" style="left:903px;top:657px;width:40px;height:22px;background:#fff"></div>
<div class="c" style="left:945px;top:657px;width:106px;height:22px;background:#fff"></div>
<div class="c" style="left:1053px;top:657px;width:40px;height:22px;background:#fff"></div>
<div class="c" style="left:1095px;top:657px;width:55px;height:22px;background:#fff"></div>
<div class="c" style="left:1152px;top:657px;width:40px;height:22px;background:#fff"></div>
<div class="c" style="left:1194px;top:657px;width:66px;height:22px;background:#fff"></div>
<div class="c" style="left:1262px;top:657px;width:93px;height:22px;background:#fff"></div>
<div class="t" style="left:5px;top:660px;">18</div>
<svg class="s" style="left:46px;top:660px" width="9" height="14"><use href="#ub"/></svg>
<div class="t" style="left:58.6px;top:661px;">(+1)</div>
<div class="t" style="left:115px;top:660px;">84</div>
<svg class="s" style="left:315px;top:664px" width="13" height="13"><use href="#ic"/></svg>
<div class="t" style="left:340px;top:658px;">Jaap (Groningen)</div>
<div class="t" style="left:621px;top:660px;">Nederland</div>
<div class="t" style="left:784px;top:660px;">17.5</div>
<svg class="s" style="left:905px;top:662px" width="8" height="14"><use href="#ug"/></svg>
<div class="t" style="left:946px;top:660px;">40</div>
<div class="t" style="left:1096px;top:660px;">240</div>
<div class="t" style="left:1196px;top:660px;">255.6</div>
<div class="c" style="left:3px;top:681px;width:40px;height:24px;background:#fff"></div>
<div class="c" style="left:45px;top:681px;width:66px;height:24px;background:#fff"></div>
<div class="c" style="left:113px;top:681px;width:198px;height:24px;background:#fff"></div>
<div class="c" style="left:313px;top:681px;width:305px;height:24px;background:#fff"></div>
<div class="c" style="left:620px;top:681px;width:160px;height:24px;background:#fff"></div>
<div class="c" style="left:782px;top:681px;width:119px;height:24px;background:#fff"></div>
<div class="c" style="left:903px;top:681px;width:40px;height:24px;background:#fff"></div>
<div class="c" style="left:945px;top:681px;width:106px;height:24px;background:#fff"></div>
<div class="c" style="left:1053px;top:681px;width:40px;height:24px;background:#fff"></div>
<div class="c" style="left:1095px;top:681px;width:55px;height:24px;background:#fff"></div>
<div class="c" style="left:1152px;top:681px;width:40px;height:24px;background:#fff"></div>
<div class="c" style="left:1194px;top:681px;width:66px;height:24px;background:#fff"></div>
<div class="c" style="left:1262px;top:681px;width:93px;height:24px;background:#fff"></div>
<div class="t" style="left:5px;top:685px;">20</div>
<svg class="s" style="left:46px;top:685px" width="9" height="14"><use href="#db"/></svg>
<div class="t" style="left:58.6px;top:686px;">(-5)</div>
<div class="t" style="left:115px;top:688px;">68</div>
<svg class="s" style="left:141px;top:682px" width="11" height="19"><use href="#m2"/></svg>
<svg class="s" style="left:315px;top:689px" width="13" height="13"><use href="#ic"/></svg>
<div class="t" style="left:340px;top:683px;">Ed (Tilburg)</div>
<div class="t" style="left:621px;top:685px;">Nederland</div>
<div class="t" style="left:784px;top:685px;">17.8</div>
<svg class="s" style="left:905px;top:687px" width="8" height="14"><use href="#ug"/></svg>
<div class="t" style="left:946px;top:685px;">66</div>
<div class="t" style="left:1096px;top:685px;">221</div>
<div class="t" style="left:1196px;top:685px;">255.4</div>
<div class="c" style="left:3px;top:707px;width:40px;height:24px;background:#fff"></div>
<div class="c" style="left:45px;top:707px;width:66px;height:24px;background:#fff"></div>
<div class="c" style="left:113px;top:707px;width:198px;height:24px;background:#fff"></div>
<div class="c" style="left:313px;top:707px;width:305px;height:24px;background:#fff"></div>
<div class="c" style="left:620px;top:707px;width:160px;height:24px;background:#fff"></div>
<div class="c" style="left:782px;top:707px;width:119px;height:24px;background:#fff"></div>
<div class="c" style="left:903px;top:707px;width:40px;height:24px;background:#fff"></div>
<div class="c" style="left:945px;top:707px;width:106px;height:24px;background:#fff"></div>
<div class="c" style="left:1053px;top:707px;width:40px;height:24px;background:#fff"></div>
<div class="c" style="left:1095px;top:707px;width:55px;height:24px;background:#fff"></div>
<div class="c" style="left:1152px;top:707px;width:40px;height:24px;background:#fff"></div>
<div class="c" style="left:1194px;top:707px;width:66px;height:24px;background:#fff"></div>
<div class="c" style="left:1262px;top:707px;width:93px;height:24px;background:#fff"></div>
<div class="t" style="left:5px;top:711px;">21</div>
<svg class="s" style="left:46px;top:711px" width="9" height="14"><use href="#ub"/></svg>
<div class="t" style="left:58.6px;top:712px;">(+1)</div>
<div class="t" style="left:115px;top:715px;">70</div>
<svg class="s" style="left:141px;top:709px" width="11" height="19"><use href="#m1"/></svg>
<svg class="s" style="left:315px;top:715px" width="13" height="13"><use href="#ic"/></svg>
<div class="t" style="left:340px;top:709px;">Jan Willem (Kesteren)</div>
<div class="t" style="left:621px;top:711px;">Nederland</div>
<div class="t" style="left:784px;top:711px;">17.8</div>
<svg class="s" style="left:905px;top:713px" width="8" height="14"><use href="#ug"/></svg>
<div class="t" style="left:946px;top:711px;">55</div>
<div class="t" style="left:1096px;top:711px;">212</div>
<div class="t" style="left:1196px;top:711px;">254.9</div>
<div class="c" style="left:3px;top:733px;width:40px;height:22px;background:#fff"></div>
<div class="c" style="left:45px;top:733px;width:66px;height:22px;background:#fff"></div>
<div class="c" style="left:113px;top:733px;width:198px;height:22px;background:#fff"></div>
<div class="c" style="left:313px;top:733px;width:305px;height:22px;background:#fff"></div>
<div class="c" style="left:620px;top:733px;width:160px;height:22px;background:#fff"></div>
<div class="c" style="left:782px;top:733px;width:119px;height:22px;background:#fff"></div>
<div class="c" style="left:903px;top:733px;width:40px;height:22px;background:#fff"></div>
<div class="c" style="left:945px;top:733px;width:106px;height:22px;background:#fff"></div>
<div class="c" style="left:1053px;top:733px;width:40px;height:22px;background:#fff"></div>
<div class="c" style="left:1095px;top:733px;width:55px;height:22px;background:#fff"></div>
<div class="c" style="left:1152px;top:733px;width:40px;height:22px;background:#fff"></div>
<div class="c" style="left:1194px;top:733px;width:66px;height:22px;background:#fff"></div>
<div class="c" style="left:1262px;top:733px;width:93px;height:22px;background:#fff"></div>
<div class="t" style="left:5px;top:736px;">22</div>
<svg class="s" style="left:46px;top:736px" width="9" height="14"><use href="#ub"/></svg>
<div class="t" style="left:58.6px;top:737px;">(+17)</div>
<div class="t" style="left:115px;top:736px;">52</div>
<svg class="s" style="left:315px;top:740px" width="13" height="13"><use href="#ic"/></svg>
<div class="t" style="left:340px;top:734px;">Jelmer (Rotterdam)</div>
<div class="t" style="left:621px;top:736px;">Nederland</div>
<div class="t" style="left:784px;top:736px;">17.4</div>
<svg class="s" style="left:905px;top:738px" width="8" height="14"><use href="#ug"/></svg>
<div class="t" style="left:946px;top:736px;">33</div>
<div class="t" style="left:1096px;top:736px;">249</div>
<div class="t" style="left:1196px;top:736px;">254.1</div>
<div class="c" style="left:3px;top:757px;width:40px;height:21px;background:#fff"></div>
<div class="c" style="left:45px;top:757px;width:66px;height:21px;background:#fff"></div>
<div class="c" style="left:113px;top:757px;width:198px;height:21px;background:#fff"></div>
<div class="c" style="left:313px;top:757px;width:305px;height:21px;background:#fff"></div>
<div class="c" style="left:620px;top:757px;width:160px;height:21px;background:#fff"></div>
<div class="c" style="left:782px;top:757px;width:119px;height:21px;background:#fff"></div>
<div class="c" style="left:903px;top:757px;width:40px;height:21px;background:#fff"></div>
<div class="c" style="left:945px;top:757px;width:106px;height:21px;background:#fff"></div>
<div class="c" style="left:1053px;top:757px;width:40px;height:21px;background:#fff"></div>
<div class="c" style="left:1095px;top:757px;width:55px;height:21px;background:#fff"></div>
<div class="c" style="left:1152px;top:757px;width:40px;height:21px;background:#fff"></div>
<div class="c" style="left:1194px;top:757px;width:66px;height:21px;background:#fff"></div>
<div class="c" style="left:1262px;top:757px;width:93px;height:21px;background:#fff"></div>
<div class="t" style="left:5px;top:759px;">23</div>
<svg class="s" style="left:46px;top:759px" width="9" height="14"><use href="#db"/></svg>
<div class="t" style="left:58.6px;top:760px;">(-6)</div>
<div class="t" style="left:115px;top:759px;">72</div>
<svg class="s" style="left:315px;top:763px" width="13" height="13"><use href="#ic"/></svg>
<div class="t" style="left:340px;top:757px;">Jochem (Rotterdam)</div>
<div class="t" style="left:621px;top:759px;">Nederland</div>
<div class="t" style="left:784px;top:759px;">18.5</div>
<svg class="s" style="left:905px;top:761px" width="8" height="14"><use href="#dg"/></svg>
<div class="t" style="left:946px;top:759px;">21</div>
<svg class="s" style="left:1054px;top:761px" width="14" height="14"><use href="#ret"/></svg>
<div class="t" style="left:1096px;top:759px;">235</div>
<div class="t" style="left:1196px;top:759px;">251.6</div>
<div class="c" style="left:3px;top:780px;width:40px;height:22px;background:#fff"></div>
<div class="c" style="left:45px;top:780px;width:66px;height:22px;background:#fff"></div>
<div class="c" style="left:113px;top:780px;width:198px;height:22px;background:#fff"></div>
<div class="c" style="left:313px;top:780px;width:305px;height:22px;background:#fff"></div>
<div class="c" style="left:620px;top:780px;width:160px;height:22px;background:#fff"></div>
<div class="c" style="left:782px;top:780px;width:119px;height:22px;background:#fff"></div>
<div class="c" style="left:903px;top:780px;width:40px;height:22px;background:#fff"></div>
<div class="c" style="left:945px;top:780px;width:106px;height:22px;background:#fff"></div>
<div class="c" style="left:1053px;top:780px;width:40px;height:22px;background:#fff"></div>
<div class="c" style="left:1095px;top:780px;width:55px;height:22px;background:#fff"></div>
<div class="c" style="left:1152px;top:780px;width:40px;height:22px;background:#fff"></div>
<div class="c" style="left:1194px;top:780px;width:66px;height:22px;background:#fff"></div>
<div class="c" style="left:1262px;top:780px;width:93px;height:22px;background:#fff"></div>
<div class="t" style="left:5px;top:783px;">24</div>
<svg class="s" style="left:46px;top:783px" width="9" height="14"><use href="#ub"/></svg>
<div class="t" style="left:58.6px;top:784px;">(+25)</div>
<div class="t" style="left:115px;top:783px;">76</div>
<svg class="s" style="left:315px;top:787px" width="13" height="13"><use href="#ic"/></svg>
<div class="t" style="left:340px;top:781px;">Erwin (Drachten)</div>
<div class="t" style="left:621px;top:783px;">Nederland</div>
<div class="t" style="left:784px;top:783px;">16.9</div>
<svg class="s" style="left:905px;top:785px" width="8" height="14"><use href="#ug"/></svg>
<div class="t" style="left:946px;top:783px;">55</div>
<div class="t" style="left:1096px;top:783px;">253</div>
<div class="t" style="left:1196px;top:783px;">251.2</div>
<div class="c" style="left:3px;top:804px;width:40px;height:21px;background:#fff"></div>
<div class="c" style="left:45px;top:804px;width:66px;height:21px;background:#fff"></div>
<div class="c" style="left:113px;top:804px;width:198px;height:21px;background:#fff"></div>
<div class="c" style="left:313px;top:804px;width:305px;height:21px;background:#fff"></div>
<div class="c" style="left:620px;top:804px;width:160px;height:21px;background:#fff"></div>
<div class="c" style="left:782px;top:804px;width:119px;height:21px;background:#fff"></div>
<div class="c" style="left:903px;top:804px;width:40px;height:21px;background:#fff"></div>
<div class="c" style="left:945px;top:804px;width:106px;height:21px;background:#fff"></div>
<div class="c" style="left:1053px;top:804px;width:40px;height:21px;background:#fff"></div>
<div class="c" style="left:1095px;top:804px;width:55px;height:21px;background:#fff"></div>
<div class="c" style="left:1152px;top:804px;width:40px;height:21px;background:#fff"></div>
<div class="c" style="left:1194px;top:804px;width:66px;height:21px;background:#fff"></div>
<div class="c" style="left:1262px;top:804px;width:93px;height:21px;background:#fff"></div>
<div class="t" style="left:5px;top:806px;">25</div>
<svg class="s" style="left:46px;top:806px" width="9" height="14"><use href="#db"/></svg>
<div class="t" style="left:58.6px;top:807px;">(-5)</div>
<div class="t" style="left:115px;top:806px;">126</div>
<svg class="s" style="left:315px;top:810px" width="13" height="13"><use href="#ic"/></svg>
<div class="t" style="left:340px;top:804px;">Alexander (Juberri - Andorra)</div>
<div class="t" style="left:621px;top:806px;">Anders</div>
<div class="t" style="left:784px;top:806px;">17.8</div>
<svg class="s" style="left:905px;top:808px" width="8" height="14"><use href="#ug"/></svg>
<div class="t" style="left:946px;top:806px;">60</div>
<div class="t" style="left:1096px;top:806px;">210</div>
<div class="t" style="left:1196px;top:806px;">251</div>
<div class="c" style="left:3px;top:827px;width:40px;height:22px;background:#fff"></div>
<div class="c" style="left:45px;top:827px;width:66px;height:22px;background:#fff"></div>
<div class="c" style="left:113px;top:827px;width:198px;height:22px;background:#fff"></div>
<div class="c" style="left:313px;top:827px;width:305px;height:22px;background:#fff"></div>
<div class="c" style="left:620px;top:827px;width:160px;height:22px;background:#fff"></div>
<div class="c" style="left:782px;top:827px;width:119px;height:22px;background:#fff"></div>
<div class="c" style="left:903px;top:827px;width:40px;height:22px;background:#fff"></div>
<div class="c" style="left:945px;top:827px;width:106px;height:22px;background:#fff"></div>
<div class="c" style="left:1053px;top:827px;width:40px;height:22px;background:#fff"></div>
<div class="c" style="left:1095px;top:827px;width:55px;height:22px;background:#fff"></div>
<div class="c" style="left:1152px;top:827px;width:40px;height:22px;background:#fff"></div>
<div class="c" style="left:1194px;top:827px;width:66px;height:22px;background:#fff"></div>
<div class="c" style="left:1262px;top:827px;width:93px;height:22px;background:#fff"></div>
<div class="t" style="left:5px;top:829px;">26</div>
<svg class="s" style="left:46px;top:829px" width="9" height="14"><use href="#ub"/></svg>
<div class="t" style="left:58.6px;top:830px;">(+18)</div>
<div class="t" style="left:115px;top:829px;">80</div>
<svg class="s" style="left:315px;top:834px" width="13" height="13"><use href="#ic"/></svg>
<div class="t" style="left:340px;top:827px;">Nils (Gent)</div>
<div class="t" style="left:621px;top:829px;">België</div>
<div class="t" style="left:784px;top:829px;">17.1</div>
<svg class="s" style="left:905px;top:831px" width="8" height="14"><use href="#ug"/></svg>
<div class="t" style="left:946px;top:829px;">58</div>
<div class="t" style="left:1096px;top:829px;">262</div>
<div class="t" style="left:1196px;top:829px;">250.3</div>
<div class="c" style="left:3px;top:851px;width:40px;height:21px;background:#fff"></div>
<div class="c" style="left:45px;top:851px;width:66px;height:21px;background:#fff"></div>
<div class="c" style="left:113px;top:851px;width:198px;height:21px;background:#fff"></div>
<div class="c" style="left:313px;top:851px;width:305px;height:21px;background:#fff"></div>
<div class="c" style="left:620px;top:851px;width:160px;height:21px;background:#fff"></div>
<div class="c" style="left:782px;top:851px;width:119px;height:21px;background:#fff"></div>
<div class="c" style="left:903px;top:851px;width:40px;height:21px;background:#fff"></div>
<div class="c" style="left:945px;top:851px;width:106px;height:21px;background:#fff"></div>
<div class="c" style="left:1053px;top:851px;width:40px;height:21px;background:#fff"></div>
<div class="c" style="left:1095px;top:851px;width:55px;height:21px;background:#fff"></div>
<div class="c" style="left:1152px;top:851px;width:40px;height:21px;background:#fff"></div>
<div class="c" style="left:1194px;top:851px;width:66px;height:21px;background:#fff"></div>
<div class="c" style="left:1262px;top:851px;width:93px;height:21px;background:#fff"></div>
<div class="t" style="left:5px;top:853px;">27</div>
<svg class="s" style="left:46px;top:853px" width="9" height="14"><use href="#ub"/></svg>
<div class="t" style="left:58.6px;top:854px;">(+2)</div>
<div class="t" style="left:115px;top:853px;">18</div>
<svg class="s" style="left:315px;top:857px" width="13" height="13"><use href="#ic"/></svg>
<div class="t" style="left:340px;top:851px;">Sjoerd (Leiden)</div>
<div class="t" style="left:621px;top:853px;">Nederland</div>
<div class="t" style="left:784px;top:853px;">17.1</div>
<svg class="s" style="left:905px;top:855px" width="8" height="14"><use href="#ug"/></svg>
<div class="t" style="left:946px;top:853px;">50</div>
<div class="t" style="left:1096px;top:853px;">240</div>
<div class="t" style="left:1196px;top:853px;">249</div>
<div class="c" style="left:3px;top:874px;width:40px;height:21px;background:#fff"></div>
<div class="c" style="left:45px;top:874px;width:66px;height:21px;background:#fff"></div>
<div class="c" style="left:113px;top:874px;width:198px;height:21px;background:#fff"></div>
<div class="c" style="left:313px;top:874px;width:305px;height:21px;background:#fff"></div>
<div class="c" style="left:620px;top:874px;width:160px;height:21px;background:#fff"></div>
<div class="c" style="left:782px;top:874px;width:119px;height:21px;background:#fff"></div>
<div class="c" style="left:903px;top:874px;width:40px;height:21px;background:#fff"></div>
<div class="c" style="left:945px;top:874px;width:106px;height:21px;background:#fff"></div>
<div class="c" style="left:1053px;top:874px;width:40px;height:21px;background:#fff"></div>
<div class="c" style="left:1095px;top:874px;width:55px;height:21px;background:#fff"></div>
<div class="c" style="left:1152px;top:874px;width:40px;height:21px;background:#fff"></div>
<div class="c" style="left:1194px;top:874px;width:66px;height:21px;background:#fff"></div>
<div class="c" style="left:1262px;top:874px;width:93px;height:21px;background:#fff"></div>
<div class="t" style="left:5px;top:876px;">28</div>
<svg class="s" style="left:46px;top:876px" width="9" height="14"><use href="#db"/></svg>
<div class="t" style="left:58.6px;top:877px;">(-5)</div>
<div class="t" style="left:115px;top:876px;">89</div>
<svg class="s" style="left:315px;top:880px" width="13" height="13"><use href="#ic"/></svg>
<div class="t" style="left:340px;top:874px;">Gerrit-Jan (Dokkum)</div>
<div class="t" style="left:621px;top:876px;">Nederland</div>
<div class="t" style="left:784px;top:876px;">17.8</div>
<svg class="s" style="left:905px;top:878px" width="8" height="14"><use href="#ug"/></svg>
<div class="t" style="left:946px;top:876px;">60</div>
<div class="t" style="left:1096px;top:876px;">207</div>
<div class="t" style="left:1196px;top:876px;">248.7</div>
<div class="c" style="left:3px;top:897px;width:40px;height:25px;background:#fff"></div>
<div class="c" style="left:45px;top:897px;width:66px;height:25px;background:#fff"></div>
<div class="c" style="left:113px;top:897px;width:198px;height:25px;background:#fff"></div>
<div class="c" style="left:313px;top:897px;width:305px;height:25px;background:#fff"></div>
<div class="c" style="left:620px;top:897px;width:160px;height:25px;background:#fff"></div>
<div class="c" style="left:782px;top:897px;width:119px;height:25px;background:#fff"></div>
<div class="c" style="left:903px;top:897px;width:40px;height:25px;background:#fff"></div>
<div class="c" style="left:945px;top:897px;width:106px;height:25px;background:#fff"></div>
<div class="c" style="left:1053px;top:897px;width:40px;height:25px;background:#fff"></div>
<div class="c" style="left:1095px;top:897px;width:55px;height:25px;background:#fff"></div>
<div class="c" style="left:1152px;top:897px;width:40px;height:25px;background:#fff"></div>
<div class="c" style="left:1194px;top:897px;width:66px;height:25px;background:#fff"></div>
<div class="c" style="left:1262px;top:897px;width:93px;height:25px;background:#fff"></div>
<div class="t" style="left:5px;top:901px;">28</div>
<svg class="s" style="left:46px;top:901px" width="9" height="14"><use href="#db"/></svg>
<div class="t" style="left:58.6px;top:902px;">(-5)</div>
<div class="t" style="left:115px;top:905px;">20</div>
<svg class="s" style="left:141px;top:899px" width="11" height="19"><use href="#m2"/></svg>
<svg class="s" style="left:315px;top:905px" width="13" height="13"><use href="#ic"/></svg>
<div class="t" style="left:340px;top:899px;">Geert (Lint)</div>
<div class="t" style="left:621px;top:901px;">België</div>
<div class="t" style="left:784px;top:901px;">17.6</div>
<svg class="s" style="left:905px;top:903px" width="8" height="14"><use href="#ug"/></svg>
<div class="t" style="left:946px;top:901px;">84</div>
<div class="t" style="left:1096px;top:901px;">238</div>
<div class="t" style="left:1196px;top:901px;">248.7</div>
<div class="c" style="left:3px;top:924px;width:40px;height:21px;background:#fff"></div>
<div class="c" style="left:45px;top:924px;width:66px;height:21px;background:#fff"></div>
<div class="c" style="left:113px;top:924px;width:198px;height:21px;background:#fff"></div>
<div class="c" style="left:313px;top:924px;width:305px;height:21px;background:#fff"></div>
<div class="c" style="left:620px;top:924px;width:160px;height:21px;background:#fff"></div>
<div class="c" style="left:782px;top:924px;width:119px;height:21px;background:#fff"></div>
<div class="c" style="left:903px;top:924px;width:40px;height:21px;background:#fff"></div>
<div class="c" style="left:945px;top:924px;width:106px;height:21px;background:#fff"></div>
<div class="c" style="left:1053px;top:924px;width:40px;height:21px;background:#fff"></div>
<div class="c" style="left:1095px;top:924px;width:55px;height:21px;background:#fff"></div>
<div class="c" style="left:1152px;top:924px;width:40px;height:21px;background:#fff"></div>
<div class="c" style="left:1194px;top:924px;width:66px;height:21px;background:#fff"></div>
<div class="c" style="left:1262px;top:924px;width:93px;height:21px;background:#fff"></div>
<div class="t" style="left:5px;top:926px;">28</div>
<svg class="s" style="left:46px;top:926px" width="9" height="14"><use href="#ub"/></svg>
<div class="t" style="left:58.6px;top:927px;">(+10)</div>
<div class="t" style="left:115px;top:926px;">88</div>
<svg class="s" style="left:315px;top:930px" width="13" height="13"><use href="#ic"/></svg>
<div class="t" style="left:340px;top:924px;">Peter (Borculo)</div>
<div class="t" style="left:621px;top:926px;">Nederland</div>
<div class="t" style="left:784px;top:926px;">16.8</div>
<svg class="s" style="left:905px;top:928px" width="8" height="14"><use href="#ug"/></svg>
<div class="t" style="left:946px;top:926px;"><b class="g">56</b></div>
<div class="t" style="left:1096px;top:926px;">241</div>
<div class="t" style="left:1196px;top:926px;">248.7</div>
<div class="t" style="left:1263px;top:926px;">(243.7 <span style="color:#FF2A00">+ 5</span>)</div>
<div class="c" style="left:3px;top:947px;width:40px;height:21px;background:#fff"></div>
<div class="c" style="left:45px;top:947px;width:66px;height:21px;background:#fff"></div>
<div class="c" style="left:113px;top:947px;width:198px;height:21px;background:#fff"></div>
<div class="c" style="left:313px;top:947px;width:305px;height:21px;background:#fff"></div>
<div class="c" style="left:620px;top:947px;width:160px;height:21px;background:#fff"></div>
<div class="c" style="left:782px;top:947px;width:119px;height:21px;background:#fff"></div>
<div class="c" style="left:903px;top:947px;width:40px;height:21px;background:#fff"></div>
<div class="c" style="left:945px;top:947px;width:106px;height:21px;background:#fff"></div>
<div class="c" style="left:1053px;top:947px;width:40px;height:21px;background:#fff"></div>
<div class="c" style="left:1095px;top:947px;width:55px;height:21px;background:#fff"></div>
<div class="c" style="left:1152px;top:947px;width:40px;height:21px;background:#fff"></div>
<div class="c" style="left:1194px;top:947px;width:66px;height:21px;background:#fff"></div>
<div class="c" style="left:1262px;top:947px;width:93px;height:21px;background:#fff"></div>
<div class="t" style="left:5px;top:949px;">31</div>
<svg class="s" style="left:46px;top:949px" width="9" height="14"><use href="#db"/></svg>
<div class="t" style="left:58.6px;top:950px;">(-6)</div>
<div class="t" style="left:115px;top:949px;">147</div>
<svg class="s" style="left:315px;top:953px" width="13" height="13"><use href="#ic"/></svg>
<div class="t" style="left:340px;top:947px;">Roel (Steenwijk)</div>
<div class="t" style="left:621px;top:949px;">Nederland</div>
<div class="t" style="left:784px;top:949px;">17.7</div>
<svg class="s" style="left:905px;top:951px" width="8" height="14"><use href="#ug"/></svg>
<div class="t" style="left:946px;top:949px;">77</div>
<div class="t" style="left:1096px;top:949px;">227</div>
<div class="t" style="left:1196px;top:949px;">248.5</div>
<div class="c" style="left:3px;top:970px;width:40px;height:22px;background:#fff"></div>
<div class="c" style="left:45px;top:970px;width:66px;height:22px;background:#fff"></div>
<div class="c" style="left:113px;top:970px;width:198px;height:22px;background:#fff"></div>
<div class="c" style="left:313px;top:970px;width:305px;height:22px;background:#fff"></div>
<div class="c" style="left:620px;top:970px;width:160px;height:22px;background:#fff"></div>
<div class="c" style="left:782px;top:970px;width:119px;height:22px;background:#fff"></div>
<div class="c" style="left:903px;top:970px;width:40px;height:22px;background:#fff"></div>
<div class="c" style="left:945px;top:970px;width:106px;height:22px;background:#fff"></div>
<div class="c" style="left:1053px;top:970px;width:40px;height:22px;background:#fff"></div>
<div class="c" style="left:1095px;top:970px;width:55px;height:22px;background:#fff"></div>
<div class="c" style="left:1152px;top:970px;width:40px;height:22px;background:#fff"></div>
<div class="c" style="left:1194px;top:970px;width:66px;height:22px;background:#fff"></div>
<div class="c" style="left:1262px;top:970px;width:93px;height:22px;background:#fff"></div>
<div class="t" style="left:5px;top:972px;">32</div>
<svg class="s" style="left:46px;top:973px" width="9" height="14"><use href="#db"/></svg>
<div class="t" style="left:58.6px;top:974px;">(-2)</div>
<div class="t" style="left:115px;top:972px;">38</div>
<svg class="s" style="left:315px;top:977px" width="13" height="13"><use href="#ic"/></svg>
<div class="t" style="left:340px;top:971px;">Fabian (Roeselare)</div>
<div class="t" style="left:621px;top:972px;">België</div>
<div class="t" style="left:784px;top:972px;">17.1</div>
<svg class="s" style="left:905px;top:974px" width="8" height="14"><use href="#ug"/></svg>
<div class="t" style="left:946px;top:972px;">55</div>
<div class="t" style="left:1096px;top:972px;">234</div>
<div class="t" style="left:1196px;top:972px;">247.9</div>
<div class="c" style="left:3px;top:994px;width:40px;height:21px;background:#fff"></div>
<div class="c" style="left:45px;top:994px;width:66px;height:21px;background:#fff"></div>
<div class="c" style="left:113px;top:994px;width:198px;height:21px;background:#fff"></div>
<div class="c" style="left:313px;top:994px;width:305px;height:21px;background:#fff"></div>
<div class="c" style="left:620px;top:994px;width:160px;height:21px;background:#fff"></div>
<div class="c" style="left:782px;top:994px;width:119px;height:21px;background:#fff"></div>
<div class="c" style="left:903px;top:994px;width:40px;height:21px;background:#fff"></div>
<div class="c" style="left:945px;top:994px;width:106px;height:21px;background:#fff"></div>
<div class="c" style="left:1053px;top:994px;width:40px;height:21px;background:#fff"></div>
<div class="c" style="left:1095px;top:994px;width:55px;height:21px;background:#fff"></div>
<div class="c" style="left:1152px;top:994px;width:40px;height:21px;background:#fff"></div>
<div class="c" style="left:1194px;top:994px;width:66px;height:21px;background:#fff"></div>
<div class="c" style="left:1262px;top:994px;width:93px;height:21px;background:#fff"></div>
<div class="t" style="left:5px;top:996px;">33</div>
<svg class="s" style="left:46px;top:996px" width="9" height="14"><use href="#ub"/></svg>
<div class="t" style="left:58.6px;top:997px;">(+2)</div>
<div class="t" style="left:115px;top:996px;">31</div>
<svg class="s" style="left:315px;top:1000px" width="13" height="13"><use href="#ic"/></svg>
<div class="t" style="left:340px;top:994px;">Harry (Echtenerbrug)</div>
<div class="t" style="left:621px;top:996px;">Nederland</div>
<div class="t" style="left:784px;top:996px;">17.1</div>
<svg class="s" style="left:905px;top:998px" width="8" height="14"><use href="#ug"/></svg>
<div class="t" style="left:946px;top:996px;">71</div>
<div class="t" style="left:1096px;top:996px;">246</div>
<div class="t" style="left:1196px;top:996px;">247.1</div>
<div class="c" style="left:3px;top:1017px;width:40px;height:21px;background:#fff"></div>
<div class="c" style="left:45px;top:1017px;width:66px;height:21px;background:#fff"></div>
<div class="c" style="left:113px;top:1017px;width:198px;height:21px;background:#fff"></div>
<div class="c" style="left:313px;top:1017px;width:305px;height:21px;background:#fff"></div>
<div class="c" style="left:620px;top:1017px;width:160px;height:21px;background:#fff"></div>
<div class="c" style="left:782px;top:1017px;width:119px;height:21px;background:#fff"></div>
<div class="c" style="left:903px;top:1017px;width:40px;height:21px;background:#fff"></div>
<div class="c" style="left:945px;top:1017px;width:106px;height:21px;background:#fff"></div>
<div class="c" style="left:1053px;top:1017px;width:40px;height:21px;background:#fff"></div>
<div class="c" style="left:1095px;top:1017px;width:55px;height:21px;background:#fff"></div>
<div class="c" style="left:1152px;top:1017px;width:40px;height:21px;background:#fff"></div>
<div class="c" style="left:1194px;top:1017px;width:66px;height:21px;background:#fff"></div>
<div class="c" style="left:1262px;top:1017px;width:93px;height:21px;background:#fff"></div>
<div class="t" style="left:5px;top:1019px;">34</div>
<svg class="s" style="left:46px;top:1019px" width="9" height="14"><use href="#db"/></svg>
<div class="t" style="left:58.6px;top:1020px;">(-8)</div>
<div class="t" style="left:115px;top:1019px;">103</div>
<svg class="s" style="left:315px;top:1023px" width="13" height="13"><use href="#ic"/></svg>
<div class="t" style="left:340px;top:1017px;">Erik (Veendam)</div>
<div class="t" style="left:621px;top:1019px;">Nederland</div>
<div class="t" style="left:784px;top:1019px;">17.6</div>
<svg class="s" style="left:905px;top:1021px" width="8" height="14"><use href="#ug"/></svg>
<div class="t" style="left:946px;top:1019px;">66</div>
<div class="t" style="left:1096px;top:1019px;">219</div>
<div class="t" style="left:1196px;top:1019px;">246.8</div>
<div class="c" style="left:3px;top:1040px;width:40px;height:23px;background:#fff"></div>
<div class="c" style="left:45px;top:1040px;width:66px;height:23px;background:#fff"></div>
<div class="c" style="left:113px;top:1040px;width:198px;height:23px;background:#fff"></div>
<div class="c" style="left:313px;top:1040px;width:305px;height:23px;background:#fff"></div>
<div class="c" style="left:620px;top:1040px;width:160px;height:23px;background:#fff"></div>
<div class="c" style="left:782px;top:1040px;width:119px;height:23px;background:#fff"></div>
<div class="c" style="left:903px;top:1040px;width:40px;height:23px;background:#fff"></div>
<div class="c" style="left:945px;top:1040px;width:106px;height:23px;background:#fff"></div>
<div class="c" style="left:1053px;top:1040px;width:40px;height:23px;background:#fff"></div>
<div class="c" style="left:1095px;top:1040px;width:55px;height:23px;background:#fff"></div>
<div class="c" style="left:1152px;top:1040px;width:40px;height:23px;background:#fff"></div>
<div class="c" style="left:1194px;top:1040px;width:66px;height:23px;background:#fff"></div>
<div class="c" style="left:1262px;top:1040px;width:93px;height:23px;background:#fff"></div>
<div class="t" style="left:5px;top:1043px;">35</div>
<svg class="s" style="left:46px;top:1043px" width="9" height="14"><use href="#db"/></svg>
<div class="t" style="left:58.6px;top:1044px;">(-15)</div>
<div class="t" style="left:115px;top:1043px;">57</div>
<svg class="s" style="left:315px;top:1047px" width="13" height="13"><use href="#ic"/></svg>
<div class="t" style="left:340px;top:1041px;">Tom van der Spek (Bennekom)</div>
<div class="t" style="left:621px;top:1043px;">Nederland</div>
<div class="t" style="left:784px;top:1043px;">17.1</div>
<svg class="s" style="left:905px;top:1045px" width="8" height="14"><use href="#ug"/></svg>
<div class="t" style="left:946px;top:1043px;">68</div>
<div class="t" style="left:1096px;top:1043px;">242</div>
<div class="t" style="left:1196px;top:1043px;">246.1</div>
</body></html>
